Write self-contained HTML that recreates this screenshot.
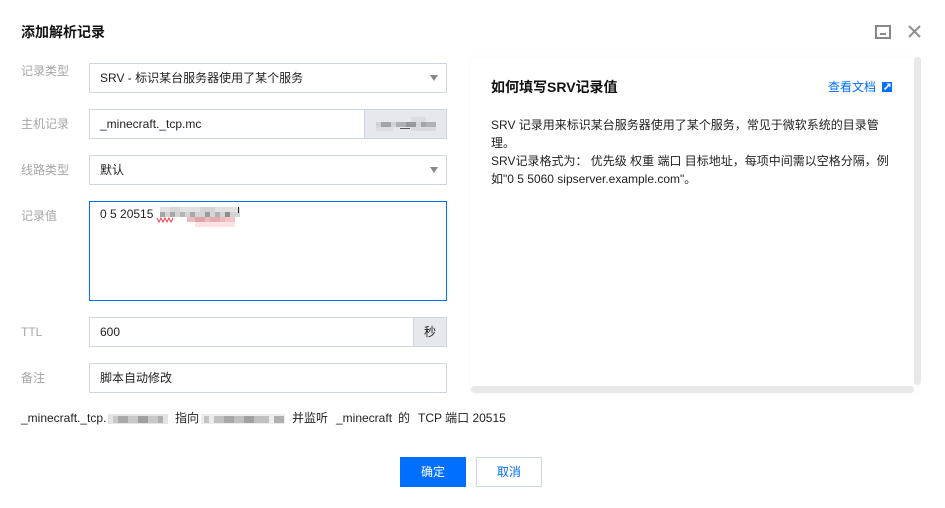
<!DOCTYPE html>
<html lang="zh-CN">
<head>
<meta charset="utf-8">
<style>
html,body{margin:0;padding:0;background:#fff;}
#p{position:relative;width:945px;height:508px;overflow:hidden;background:#fff;font-family:"Liberation Sans","Noto Sans CJK SC",sans-serif;font-size:12px;color:#222;}
#p div{position:absolute;box-sizing:border-box;white-space:nowrap;}
#p svg{position:absolute;}
.l{color:#a6a6a6;line-height:18px;left:21px;}
.b{left:89px;width:358px;height:30px;border:1px solid #cfd5de;background:#fff;line-height:28px;padding-left:10px;color:#222;}
.ar{width:0;height:0;border-left:4px solid transparent;border-right:4px solid transparent;border-top:6px solid #888;left:430px;}
.add{background:#e5e8ed;border:1px solid #cfd5de;height:30px;line-height:28px;text-align:center;}
.t{line-height:18px;}
</style>
</head>
<body>
<div id="p">
<div class="t" style="left:21px;top:23px;font-size:14px;font-weight:bold;color:#111;">添加解析记录</div>

<svg style="left:875px;top:25px" width="16" height="14" viewBox="0 0 16 14"><rect x="1" y="1" width="14" height="12" fill="none" stroke="#888" stroke-width="2"/><rect x="5" y="8" width="6" height="2" fill="#888"/></svg>
<svg style="left:908px;top:25px" width="13" height="13" viewBox="0 0 13 13"><path d="M1 1L12 12M12 1L1 12" stroke="#8f8f8f" stroke-width="2" fill="none"/></svg>

<div class="l" style="top:62px;">记录类型</div>
<div class="b" style="top:63px;">SRV - 标识某台服务器使用了某个服务</div>
<div class="ar" style="top:75px;"></div>

<div class="l" style="top:115px;">主机记录</div>
<div class="b" style="top:109px;">_minecraft._tcp.mc</div>
<div class="add" style="left:364px;top:109px;width:83px;"></div>
<svg style="left:376px;top:117px" width="60" height="15" viewBox="0 0 60 15">
<rect x="35" y="0" width="15" height="5" fill="#dadce2"/>
<rect x="0" y="5" width="5" height="5" fill="#d0d2d8"/><rect x="5" y="5" width="10" height="5" fill="#a2a4aa"/><rect x="15" y="5" width="5" height="5" fill="#d0d2d8"/><rect x="20" y="5" width="10" height="5" fill="#aeb0b6"/><rect x="30" y="5" width="10" height="5" fill="#96989e"/><rect x="40" y="5" width="5" height="5" fill="#d4d6dc"/><rect x="45" y="5" width="5" height="5" fill="#a2a4aa"/><rect x="50" y="5" width="10" height="5" fill="#b0b2b8"/>
<rect x="0" y="10" width="17" height="4" fill="#dcdee4"/><rect x="24" y="11" width="10" height="1" fill="#555"/><rect x="35" y="10" width="25" height="4" fill="#d8dae0"/>
</svg>

<div class="l" style="top:161px;">线路类型</div>
<div class="b" style="top:155px;">默认</div>
<div class="ar" style="top:167px;"></div>

<div class="l" style="top:207px;">记录值</div>
<div style="left:89px;top:201px;width:358px;height:100px;border:1px solid #006eff;background:#fff;"></div>
<div class="t" style="left:100px;top:205px;">0 5 20515</div>
<svg style="left:155px;top:205px" width="86" height="24" viewBox="0 0 86 24">
<path d="M2 14l2 4 2-4 2 4 2-4 2 4 2-4 2 4 2-4" fill="none" stroke="#f04050" stroke-width="1" transform="translate(0,-1)"/>
<rect x="5" y="2" width="80" height="5" fill="#e2e2e2"/>
<rect x="15" y="2" width="10" height="5" fill="#d6d6d6"/><rect x="45" y="2" width="15" height="5" fill="#d4d4d4"/>
<rect x="5" y="7" width="80" height="5" fill="#d4d4d4"/>
<rect x="5" y="7" width="5" height="5" fill="#a4a4a4"/><rect x="15" y="7" width="5" height="5" fill="#a8a8a8"/><rect x="25" y="7" width="5" height="5" fill="#b4b4b4"/><rect x="35" y="7" width="5" height="5" fill="#a8a8a8"/><rect x="50" y="7" width="5" height="5" fill="#9c9c9c"/><rect x="60" y="7" width="5" height="5" fill="#b0b0b0"/><rect x="70" y="7" width="5" height="5" fill="#8e8e8e"/>
<rect x="32" y="12" width="48" height="5" fill="#e8bcbc"/><rect x="40" y="12" width="10" height="5" fill="#dca4a4"/><rect x="55" y="12" width="10" height="5" fill="#e4acae"/><rect x="70" y="12" width="10" height="5" fill="#f4c4c8"/>
<rect x="40" y="17" width="40" height="5" fill="#fde2e4"/>
</svg>
<div style="left:238px;top:207px;width:1px;height:6px;background:#222;"></div>

<div class="l" style="top:323px;">TTL</div>
<div class="b" style="top:317px;">600</div>
<div class="add" style="left:413px;top:317px;width:34px;">秒</div>

<div class="l" style="top:369px;">备注</div>
<div class="b" style="top:363px;">脚本自动修改</div>

<div style="left:471px;top:57px;width:447px;height:336px;background:#fff;box-shadow:0 0 4px rgba(0,0,0,.04);"></div>
<div style="left:914px;top:57px;width:7px;height:328px;background:#e8e8e8;border-radius:4px;"></div>
<div style="left:471px;top:386px;width:443px;height:7px;background:#e8e8e8;border-radius:4px;"></div>

<div class="t" style="left:491px;top:78px;font-size:14px;font-weight:bold;color:#111;">如何填写SRV记录值</div>
<div class="t" style="left:828px;top:78px;color:#006eff;">查看文档</div>
<svg style="left:882px;top:82px" width="10" height="10" viewBox="0 0 10 10"><rect width="10" height="10" fill="#006eff"/><path d="M2.5 7.5L7.5 2.5" stroke="#fff" stroke-width="1.6"/><path d="M4.5 1.5H8.5V5.5Z" fill="#fff"/></svg>
<div class="t" style="left:491px;top:116px;">SRV 记录用来标识某台服务器使用了某个服务，常见于微软系统的目录管</div>
<div class="t" style="left:491px;top:134px;">理。</div>
<div class="t" style="left:491px;top:152px;">SRV记录格式为： 优先级 权重 端口 目标地址，每项中间需以空格分隔，例</div>
<div class="t" style="left:491px;top:170px;">如"0 5 5060 sipserver.example.com"。</div>

<div class="t" style="left:21px;top:409px;">_minecraft._tcp.</div>
<svg style="left:108px;top:413px" width="180" height="13" viewBox="0 0 180 13">
<rect x="0" y="1" width="60" height="10" fill="#e4e4e4"/>
<rect x="5" y="3" width="50" height="7" fill="#c8c8c8"/><rect x="10" y="3" width="10" height="7" fill="#a8a8a8"/><rect x="30" y="3" width="10" height="7" fill="#a0a0a0"/><rect x="50" y="3" width="5" height="7" fill="#b0b0b0"/>
<rect x="93" y="1" width="84" height="10" fill="#ececec"/>
<rect x="96" y="3" width="5" height="7" fill="#c4c4c4"/><rect x="106" y="3" width="55" height="7" fill="#c0c0c0"/><rect x="116" y="3" width="10" height="7" fill="#a8a8a8"/><rect x="136" y="3" width="10" height="7" fill="#a0a0a0"/><rect x="161" y="3" width="5" height="7" fill="#eeeeee"/><rect x="166" y="3" width="10" height="7" fill="#b0b0b0"/>
</svg>
<div class="t" style="left:175px;top:409px;">指向</div>
<div class="t" style="left:292px;top:409px;">并监听</div>
<div class="t" style="left:336px;top:409px;">_minecraft</div>
<div class="t" style="left:398px;top:409px;">的</div>
<div class="t" style="left:418px;top:409px;">TCP 端口 20515</div>

<div style="left:400px;top:457px;width:66px;height:30px;background:#006eff;color:#fff;text-align:center;line-height:30px;">确定</div>
<div style="left:476px;top:457px;width:66px;height:30px;border:1px solid #cfd5de;background:#fff;color:#006eff;text-align:center;line-height:28px;">取消</div>
</div>
</body>
</html>
